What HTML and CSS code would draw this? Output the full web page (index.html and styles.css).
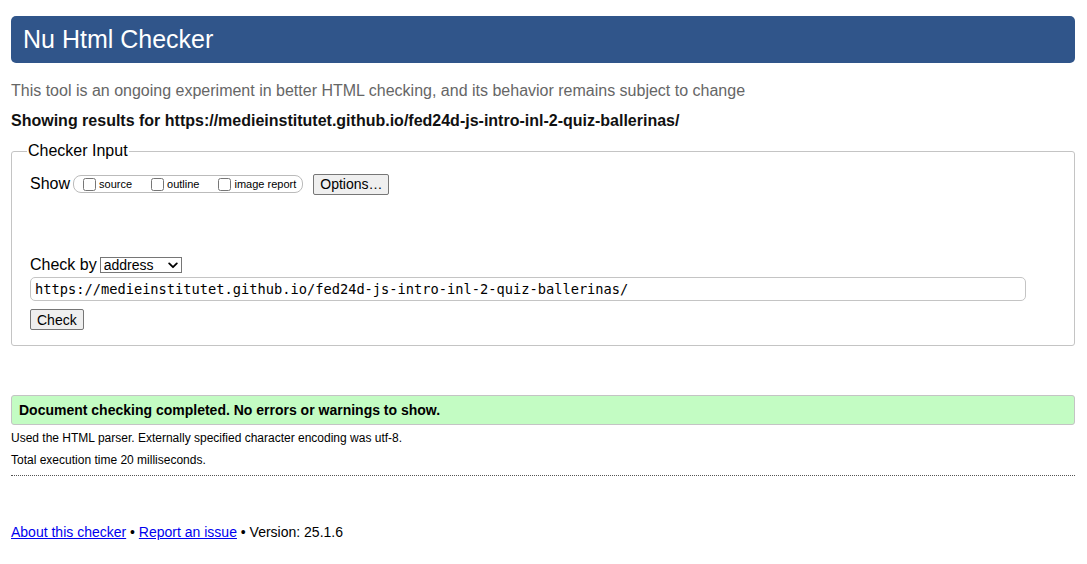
FILE: index.html
```html
<!DOCTYPE html>
<html>
<head>
<meta charset="utf-8">
<title>Nu Html Checker</title>
<link rel="stylesheet" href="styles.css">
</head>
<body>
<h1 class="banner">Nu Html Checker</h1>
<p class="intro">This tool is an ongoing experiment in better HTML checking, and its behavior remains subject to change</p>
<p class="results-for">Showing results for https://medieinstitutet.github.io/fed24d-js-intro-inl-2-quiz-ballerinas/</p>
<form class="checker">
  <fieldset class="checker-fs">
    <legend>Checker Input</legend>
    <div class="show-row">
      <span class="lbl">Show</span>
      <span class="opts">
        <label class="opt"><input type="checkbox">source</label>
        <label class="opt"><input type="checkbox">outline</label>
        <label class="opt"><input type="checkbox">image report</label>
      </span>
      <button type="button" class="btn btn-options">Options…</button>
    </div>
    <div class="checkby-row">
      <span class="lbl">Check by</span>
      <span class="sel-wrap">
        <select class="sel"><option>address</option></select>
        <svg class="chev" width="10" height="7" viewBox="0 0 10 7" aria-hidden="true"><path d="M1.2 1.4 L5 5.2 L8.8 1.4" fill="none" stroke="#000" stroke-width="1.8" stroke-linecap="round" stroke-linejoin="round"/></svg>
      </span>
    </div>
    <input class="url" type="text" value="https://medieinstitutet.github.io/fed24d-js-intro-inl-2-quiz-ballerinas/">
    <div class="check-row"><button type="button" class="btn btn-check">Check</button></div>
  </fieldset>
</form>
<div class="success">Document checking completed. No errors or warnings to show.</div>
<p class="details">Used the HTML parser. Externally specified character encoding was utf-8.</p>
<p class="details">Total execution time 20 milliseconds.</p>
<hr class="dots">
<p class="footer"><a href="#">About this checker</a> • <a href="#">Report an issue</a> • Version: 25.1.6</p>
</body>
</html>
```
FILE: styles.css
```css
html, body {
  margin: 0;
  padding: 0;
  background: #fff;
}
body {
  font-family: "Liberation Sans", Arial, sans-serif;
  color: #000;
  padding: 16px 12px 0 11px;
}
.banner {
  margin: 0;
  height: 47px;
  background: #30558a;
  color: #fff;
  border-radius: 5px;
  font-size: 25px;
  font-weight: normal;
  line-height: 47px;
  padding: 0 12px;
}
.intro {
  margin: 18px 0 0;
  font-size: 16px;
  line-height: 20px;
  color: #666;
}
.results-for {
  margin: 10px 0 0;
  font-size: 16px;
  line-height: 20px;
  font-weight: bold;
  color: #111;
}
.checker {
  margin: 10px 0 0;
}
.checker-fs {
  margin: 0;
  border: 1px solid #c4c4c4;
  border-radius: 3px;
  padding: 4px 18px 15px 18px;
  min-width: 0;
}
.checker-fs legend {
  font-size: 16px;
  line-height: 20px;
  padding: 0 1px;
  margin-left: -3px;
}
.show-row {
  display: flex;
  align-items: center;
  height: 24px;
  margin-top: 7px;
}
.lbl {
  font-size: 16px;
  color: #000;
}
.opts {
  display: inline-flex;
  align-items: center;
  margin-left: 3px;
  border: 1px solid #bbb;
  border-radius: 8px;
  height: 16px;
  padding: 0 6px 0 9px;
  font-size: 11px;
  color: #000;
}
.opt {
  display: inline-flex;
  align-items: center;
  margin-right: 19px;
}
.opt:last-child {
  margin-right: 0;
}
.opt input {
  margin: 0 3px 0 0;
  width: 13px;
  height: 13px;
}
.btn {
  font-family: "Liberation Sans", Arial, sans-serif;
  font-size: 14px;
  background: #efefef;
  border: 1px solid #767676;
  border-radius: 2px;
  color: #000;
  padding: 0 6px;
  height: 21px;
}
.btn-options {
  margin-left: 10px;
  padding: 0 5px 0 6px;
}
.checkby-row {
  display: flex;
  align-items: center;
  margin-top: 59px;
  height: 20px;
}
.sel-wrap {
  position: relative;
  display: inline-flex;
  margin-left: 3px;
}
.sel {
  -webkit-appearance: none;
  appearance: none;
  box-sizing: border-box;
  font-family: "Liberation Sans", Arial, sans-serif;
  font-size: 14px;
  height: 16px;
  width: 82px;
  border: 1px solid #767676;
  border-radius: 0;
  background: #fff;
  color: #000;
  padding: 0 0 0 3px;
  line-height: 14px;
}
.chev {
  position: absolute;
  right: 4px;
  top: 5px;
  pointer-events: none;
}
.url {
  display: block;
  box-sizing: border-box;
  width: 996px;
  height: 24px;
  margin-top: 2px;
  border: 1px solid #c4c4c4;
  border-radius: 5px;
  font-family: "DejaVu Sans Mono", monospace;
  font-size: 13.7px;
  padding: 0 4px;
  color: #000;
}
.check-row {
  margin-top: 8px;
}
.btn-check {
  height: 21px;
  padding: 0 6px;
}
.success {
  margin-top: 49px;
  background: #c3fcc3;
  border: 1px solid #c4c4c4;
  border-radius: 3px;
  height: 28px;
  line-height: 28px;
  padding: 0 7px;
  font-weight: bold;
  font-size: 14px;
}
.details {
  margin: 5px 0 0;
  font-size: 12px;
  line-height: 16px;
}
.details + .details {
  margin-top: 6px;
}
.dots {
  margin: 7px 0 0;
  border: 0;
  border-top: 1px dotted #555;
  height: 0;
}
.footer {
  margin: 47px 0 0;
  font-size: 14px;
  line-height: 18px;
}
.footer a {
  color: #00e;
}
```
